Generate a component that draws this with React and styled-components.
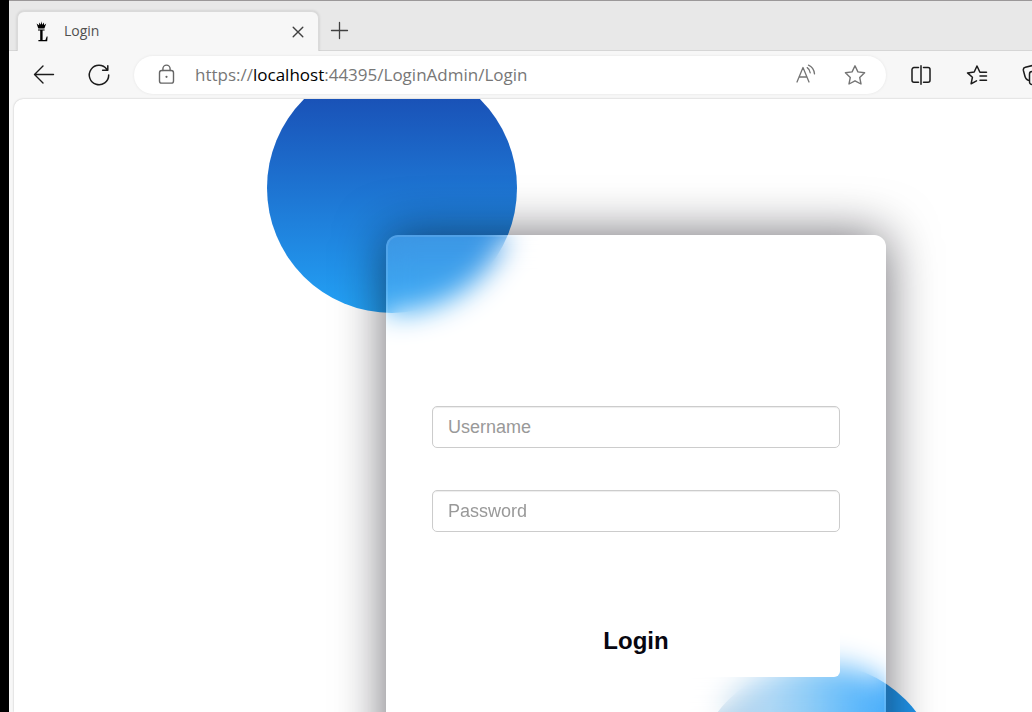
import React from "react";
import styled, { createGlobalStyle } from "styled-components";

const GlobalStyle = createGlobalStyle`
  *, *::before, *::after { box-sizing: border-box; }
  body { margin: 0; background: #fff; }
  button, input { font: inherit; }
`;

const Desktop = styled.div`
  height: 100vh;
  padding-left: 9px;
  overflow: hidden;
  background: #000;
`;

const BrowserWindow = styled.div`
  display: flex;
  flex-direction: column;
  height: 100%;
  background: #f7f7f7;
  border-top: 1px solid #9b9899;
  font-family: "Open Sans", "Noto Sans", sans-serif;
`;

const TabStrip = styled.div`
  display: flex;
  align-items: flex-end;
  flex: none;
  height: 50px;
  padding-left: 8px;
  background: #e8e8e8;
  border-bottom: 1px solid #d6d6d6;
`;

const Tab = styled.div`
  display: flex;
  align-items: center;
  gap: 12px;
  width: 302px;
  height: 40px;
  padding: 0 10px 2px 12px;
  margin-bottom: -1px;
  background: #f7f7f7;
  border: 1px solid #dadada;
  border-bottom: 0;
  border-radius: 7px 7px 0 0;
  box-shadow: 0 0 3px rgba(0, 0, 0, 0.16);
  clip-path: inset(-4px -4px 0 -4px);
`;

const TabTitle = styled.span`
  flex: 1;
  font-size: 14px;
  font-weight: 400;
  line-height: 20px;
  color: #505050;
`;

const IconButton = styled.button`
  display: flex;
  align-items: center;
  justify-content: center;
  flex: none;
  width: ${(p) => p.$size || 24}px;
  height: ${(p) => p.$size || 24}px;
  padding: 0;
  border: 0;
  background: none;
  color: ${(p) => p.$color || "#1b1b1b"};
`;

const NewTab = styled(IconButton)`
  margin: 0 0 7px 9px;
`;

const Toolbar = styled.div`
  display: flex;
  align-items: center;
  flex: none;
  gap: 31px;
  height: 48px;
  padding: 0 0 1px 23px;
`;

const AddressBar = styled.div`
  display: flex;
  align-items: center;
  flex: 1;
  height: 38px;
  padding: 0 19px 0 20px;
  background: #fff;
  border-radius: 19px;
  box-shadow: 0 0 3px rgba(0, 0, 0, 0.08);
  margin-left: -8px;
`;

const Url = styled.a`
  flex: 1;
  margin-left: 17px;
  font-size: 17px;
  font-weight: 400;
  line-height: 24px;
  color: #777;
  text-decoration: none;
`;

const Host = styled.span`
  color: #000;
`;

const AddressActions = styled.div`
  display: flex;
  gap: 25px;
`;

const Extensions = styled.div`
  display: flex;
  gap: 32px;
  width: 123px;
  margin-left: -8px;
  overflow: hidden;
`;

const Viewport = styled.main`
  flex: 1;
  min-height: 0;
  margin-left: 5px;
  padding: 136px 0 0 372px;
  overflow: hidden;
  background: #fff;
  border-radius: 9px 0 0 0;
  box-shadow: 0 0 2px rgba(0, 0, 0, 0.25);
`;

const Stage = styled.div`
  position: relative;
  width: 500px;
`;

const Shape = styled.div`
  position: absolute;
  width: 250px;
  height: 250px;
  border-radius: 50%;
`;

const TopShape = styled(Shape)`
  left: -119px;
  top: -172px;
  background: linear-gradient(#1845ad, #23a2f6);
`;

const BottomShape = styled(Shape)`
  right: -56px;
  top: 428px;
  background: linear-gradient(to right, #b5cbdc, #a4d2f4 31%, #7ec5f5 47%, #4fb2fb 63%, #35a5fb 75%, #2096ec 80%);
`;

const LoginForm = styled.form`
  position: relative;
  display: flex;
  flex-direction: column;
  height: 650px;
  padding: 169px 44px 0;
  border: 2px solid rgba(255, 255, 255, 0.1);
  border-radius: 12px;
  background: rgba(255, 255, 255, 0.13);
  backdrop-filter: blur(14px);
  box-shadow: 0 0 50px rgba(8, 7, 16, 0.6);
  font-family: "Liberation Sans", Arial, sans-serif;
`;

const Field = styled.input`
  width: 100%;
  height: 42px;
  margin-bottom: 42px;
  padding: 0 15px;
  border: 1px solid #ccc;
  border-radius: 5px;
  background: #fff;
  box-shadow: inset 0 1px 1px rgba(0, 0, 0, 0.075);
  font-size: 18px;
  color: #555;
  &::placeholder { color: #999; opacity: 1; }
`;

const SubmitButton = styled.button`
  height: 72px;
  margin-top: 31px;
  padding: 0;
  border: 0;
  border-radius: 6px;
  background: #fff;
  font-size: 24px;
  font-weight: 700;
  color: #080710;
`;

const Svg = ({ size = 24, width = 1.4, children }) => (
  <svg width={size} height={size} viewBox={`0 0 ${size} ${size}`} fill="none" stroke="currentColor"
    strokeWidth={width} strokeLinecap="round" strokeLinejoin="round" aria-hidden="true">
    {children}
  </svg>
);

const Favicon = () => (
  <Svg size={22}>
    <g fill="#000" stroke="none">
      <path d="M6.6 3.4 9 5.2 9.3 2.6 10.8 4.8 11.3 1.2 12.2 4.8 14 2.6 14 5.2 16.2 3.4 14.4 8.4H8.3Z" />
      <path d="M8 9.6h6.6v1H12.6v9.4h2.8l1.3-3.4h.9L17.2 21.2H8.4v-1.1h1.8v-9.5H8Z" />
    </g>
  </Svg>
);

export default function App() {
  return (
    <>
      <GlobalStyle />
      <Desktop>
        <BrowserWindow>
          <TabStrip>
            <Tab>
              <Favicon />
              <TabTitle>Login</TabTitle>
              <IconButton $size={20} $color="#404040" aria-label="Close tab">
                <Svg size={20}><path d="M5.2 6.2 14.8 15.8M14.8 6.2 5.2 15.8" /></Svg>
              </IconButton>
            </Tab>
            <NewTab $color="#404040" aria-label="New tab">
              <Svg width={1.3}><path d="M11.5 3.5v16M3.5 11.5h16" /></Svg>
            </NewTab>
          </TabStrip>
          <Toolbar>
            <IconButton aria-label="Back">
              <Svg><path d="M21.5 11.5H2.8M11 3 2.5 11.5 11 20" /></Svg>
            </IconButton>
            <IconButton aria-label="Refresh">
              <Svg width={1.5}><path d="M21.7 12A9.7 9.7 0 1 1 19.8 6.3M20.8 2.7V7.3H15.6" /></Svg>
            </IconButton>
            <AddressBar>
              <IconButton $color="#666" aria-label="Site information">
                <Svg>
                  <rect x="5.5" y="7.5" width="14" height="12.6" rx="2.2" />
                  <path d="M8.9 7.5V5.7a3.6 3.6 0 0 1 7.2 0v1.8" />
                  <circle cx="12.5" cy="13.8" r="1.1" fill="currentColor" stroke="none" />
                </Svg>
              </IconButton>
              <Url href="https://localhost:44395/LoginAdmin/Login">https://<Host>localhost</Host>:44395/LoginAdmin/Login</Url>
              <AddressActions>
                <IconButton $color="#747474" aria-label="Read aloud">
                  <Svg width={1.3}>
                    <path d="M3 19 9 4.5 15 19M5 14h8M13.2 4.6q2.6 1.6 3 5.2M14.5 2.2q5.2 2.2 6 8.6" />
                  </Svg>
                </IconButton>
                <IconButton $color="#747474" aria-label="Add to favorites">
                  <Svg><path d="M12 2.8 14.9 8.9 21.6 9.8 16.7 14.4 18 21 12 17.8 6 21 7.3 14.4 2.4 9.8 9.1 8.9Z" /></Svg>
                </IconButton>
              </AddressActions>
            </AddressBar>
            <Extensions>
              <IconButton aria-label="Split screen">
                <Svg width={1.5}>
                  <path d="M12 2.8v18.4M9.5 4.6H5a2 2 0 0 0-2 2v10.6a2 2 0 0 0 2 2h4.5M14.5 4.6H19a2 2 0 0 1 2 2v10.6a2 2 0 0 1-2 2h-4.5" />
                </Svg>
              </IconButton>
              <IconButton aria-label="Favorites">
                <Svg width={1.5}>
                  <path d="M14.8 9 12 3 9.2 9 2.5 9.9 7.4 14.3 6.1 20.8 11.5 17.8M15 9.2H21.5M15 13H21.5M15 17.2H21.5" />
                </Svg>
              </IconButton>
              <IconButton aria-label="Collections">
                <Svg width={1.5}>
                  <path d="M7.2 17.2C4.8 16.5 4.2 15 3.6 12L2.4 7.5C2 5.4 2.7 4.6 4.4 4.2L12 2.4M20 8.5H11a2.5 2.5 0 0 0-2.5 2.5v8a2.5 2.5 0 0 0 2.5 2.5h9M12 14.5h7" />
                </Svg>
              </IconButton>
            </Extensions>
          </Toolbar>
          <Viewport>
            <Stage>
              <TopShape />
              <BottomShape />
              <LoginForm onSubmit={(e) => e.preventDefault()}>
                <Field type="text" placeholder="Username" aria-label="Username" />
                <Field type="password" placeholder="Password" aria-label="Password" />
                <SubmitButton type="submit">Login</SubmitButton>
              </LoginForm>
            </Stage>
          </Viewport>
        </BrowserWindow>
      </Desktop>
    </>
  );
}
